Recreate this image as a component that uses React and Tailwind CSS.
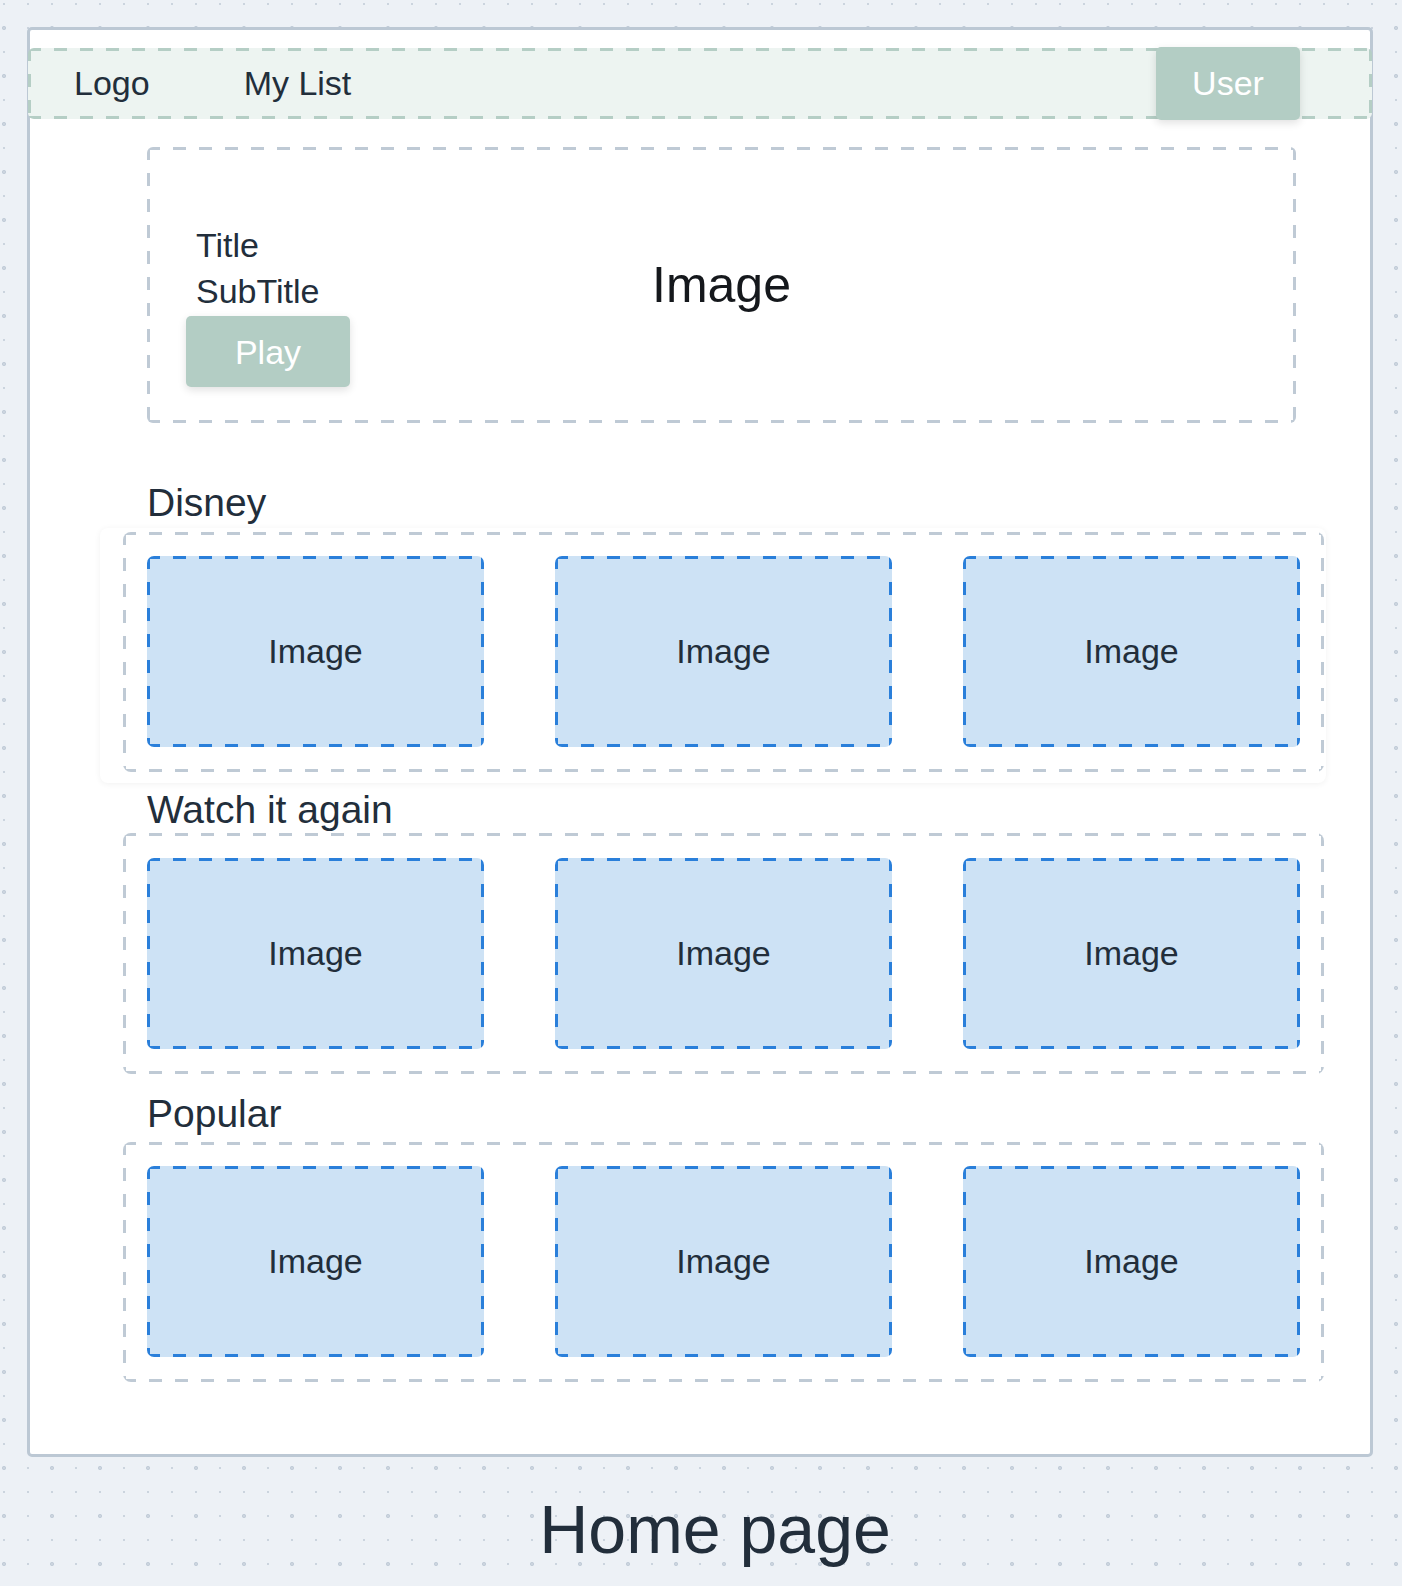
import React from 'react';

// dashed outlines drawn as background stripes so the dash length matches the sketch (13px on / 13px off)
const grayDash =
    'bg-no-repeat bg-[repeating-linear-gradient(90deg,#bfcad5_0_13px,transparent_13px_26px),repeating-linear-gradient(90deg,#bfcad5_0_13px,transparent_13px_26px),repeating-linear-gradient(180deg,#bfcad5_0_13px,transparent_13px_26px),repeating-linear-gradient(180deg,#bfcad5_0_13px,transparent_13px_26px)] bg-[length:100%_3px,100%_3px,3px_100%,3px_100%] bg-[position:0_0,0_100%,0_0,100%_0]';
const blueDash =
    'bg-no-repeat bg-[repeating-linear-gradient(90deg,#2a7fda_0_13px,transparent_13px_26px),repeating-linear-gradient(90deg,#2a7fda_0_13px,transparent_13px_26px),repeating-linear-gradient(180deg,#2a7fda_0_13px,transparent_13px_26px),repeating-linear-gradient(180deg,#2a7fda_0_13px,transparent_13px_26px)] bg-[length:100%_3px,100%_3px,3px_100%,3px_100%] bg-[position:0_0,0_100%,0_0,100%_0]';
const greenDash =
    'bg-no-repeat bg-[repeating-linear-gradient(90deg,#b5cec5_0_13px,transparent_13px_26px),repeating-linear-gradient(90deg,#b5cec5_0_13px,transparent_13px_26px),repeating-linear-gradient(180deg,#b5cec5_0_13px,transparent_13px_26px),repeating-linear-gradient(180deg,#b5cec5_0_13px,transparent_13px_26px)] bg-[length:100%_3px,100%_3px,3px_100%,3px_100%] bg-[position:0_0,0_100%,0_0,100%_0]';

const rows = [
    { title: 'Disney', labelGap: 'mt-[58px]', boxGap: 'mt-[3px]', pad: 'pt-[24px] pb-[25px]', highlighted: true },
    { title: 'Watch it again', labelGap: 'mt-[5px]', boxGap: 'mt-[1px]', pad: 'pt-[25px] pb-[25px]' },
    { title: 'Popular', labelGap: 'mt-[18px]', boxGap: 'mt-[6px]', pad: 'pt-[24px] pb-[25px]' },
];

const ImageCard = () => (
    <div className={`w-[337px] h-[191px] bg-[#cde2f5] ${blueDash} rounded-[7px] flex items-center justify-center text-[34px] text-[#222e3b]`}>
        Image
    </div>
);

const Row = ({ pad }) => (
    <div className={`w-[1201px] ${grayDash} rounded-[8px] flex gap-[71px] px-[24px] ${pad}`}>
        <ImageCard />
        <ImageCard />
        <ImageCard />
    </div>
);

const App = () => {
    return (
        <div
            className="min-h-[1586px] w-full pt-[27px] bg-[#edf1f6] bg-[radial-gradient(circle,#cbd4de_1px,transparent_1.4px),radial-gradient(circle,#c3cdd9_1.8px,transparent_2.3px)] bg-[length:24px_24px,48px_48px] bg-[position:-8px_-8px,-20px_4px] text-[#222e3b]"
            style={{ fontFamily: '"Liberation Sans", Arial, sans-serif' }}
        >
            {/* Frame */}
            <div className="ml-[27px] w-[1346px] h-[1430px] border-[3px] border-[#bcc8d4] rounded-[5px] bg-white flex flex-col">
                {/* Nav */}
                <div className={`mt-[18px] -ml-[2px] w-[1344px] h-[71px] bg-[#edf4f1] ${greenDash} rounded-[6px] flex items-center pl-[46px] text-[34px]`}>
                    <span>Logo</span>
                    <span className="ml-[94px]">My List</span>
                    <div className="ml-auto mr-[72px] w-[144px] h-[73px] shrink-0 bg-[#b3cdc4] rounded-[5px] shadow-[0_3px_8px_rgba(0,0,0,0.12)] flex items-center justify-center text-white">
                        User
                    </div>
                </div>

                {/* Hero */}
                <div className={`mt-[28px] ml-[117px] w-[1149px] h-[276px] ${grayDash} rounded-[6px] grid`}>
                    <div className="[grid-area:1/1] flex items-center justify-center text-[50px] text-[#15181c]">
                        Image
                    </div>
                    <div className="[grid-area:1/1] flex flex-col items-start pt-[75px] pl-[39px] text-[34px] leading-[46px]">
                        <span className="ml-[10px]">Title</span>
                        <span className="ml-[10px]">SubTitle</span>
                        <div className="mt-[2px] w-[164px] h-[71px] bg-[#b3cdc4] rounded-[5px] shadow-[0_3px_8px_rgba(0,0,0,0.12)] flex items-center justify-center text-white">
                            Play
                        </div>
                    </div>
                </div>

                {/* Rows */}
                {rows.map((row) => (
                    <React.Fragment key={row.title}>
                        <h2 className={`${row.labelGap} ml-[117px] text-[39px] leading-[44px] font-normal`}>{row.title}</h2>
                        {row.highlighted ? (
                            <div className={`${row.boxGap} ml-[70px] w-[1226px] rounded-[8px] shadow-[0_1px_6px_rgba(0,0,0,0.06)] pl-[23px] pr-[2px] pt-[4px] pb-[11px]`}>
                                <Row pad={row.pad} />
                            </div>
                        ) : (
                            <div className={`${row.boxGap} ml-[93px]`}>
                                <Row pad={row.pad} />
                            </div>
                        )}
                    </React.Fragment>
                ))}
            </div>

            {/* Caption */}
            <div className="mt-[39px] pl-[28px] text-center text-[68px] leading-[66px]">Home page</div>
        </div>
    );
};

export default App;
